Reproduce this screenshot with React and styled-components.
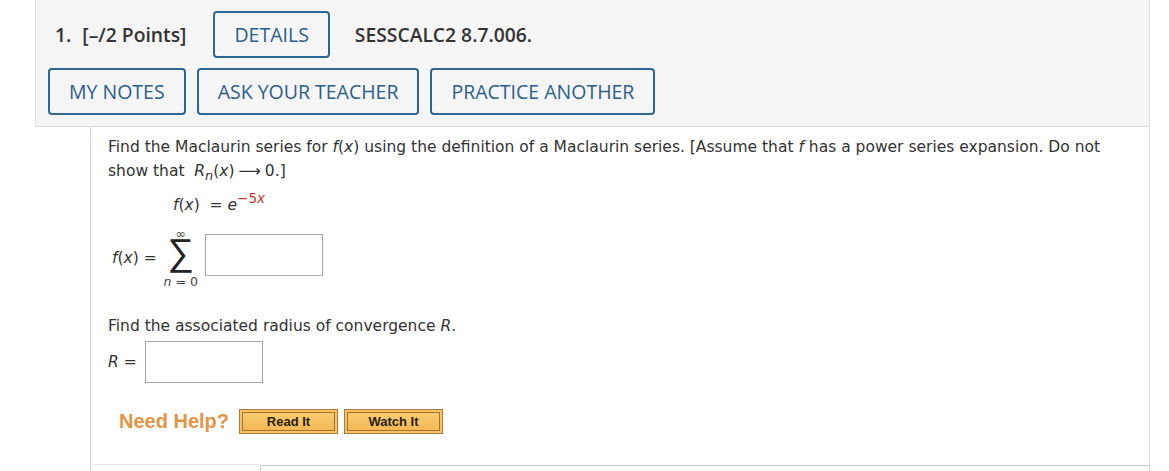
import React from 'react';
import styled, { createGlobalStyle } from 'styled-components';

const GlobalStyle = createGlobalStyle`
  html, body {
    margin: 0;
    padding: 0;
    background: #fff;
    width: 1169px;
    height: 471px;
    overflow: hidden;
  }
`;

const Page = styled.div`
  padding-left: 35px;
  width: 1115px;
`;

const Header = styled.div`
  background: #f5f5f5;
  border: 1px solid #dedede;
  border-top: none;
  padding: 11px 12px 11px;
  display: flex;
  flex-direction: column;
  gap: 10px;
  font-family: 'Open Sans', sans-serif;
`;

const Row = styled.div`
  display: flex;
  align-items: center;
  gap: ${p => p.gap || 11}px;
`;

const Title = styled.div`
  font-weight: 600;
  font-size: 19.3px;
  color: #333;
  padding-left: ${p => p.indent || 0}px;
  margin-right: ${p => p.after || 0}px;
  display: flex;
  gap: 11px;
`;

const OutlineButton = styled.button`
  height: 47px;
  padding: 0 19px;
  background: transparent;
  border: 2px solid #2f6794;
  border-radius: 4px;
  color: #2c5f8c;
  font-family: 'Open Sans', sans-serif;
  font-size: 19.5px;
  font-weight: 500;
  letter-spacing: 0;
  cursor: pointer;
`;

const Question = styled.div`
  margin-left: 55px;
  border-left: 1px solid #dcdcdc;
  border-right: 1px solid #dedede;
  height: 344px;
  display: flex;
  flex-direction: column;
  font-family: 'DejaVu Sans', Verdana, sans-serif;
  font-size: 15.5px;
  color: #333;
`;

const Body = styled.div`
  flex: 1;
  padding: 8px 40px 0 17px;
`;

const Para = styled.p`
  margin: ${p => p.top || 0}px 0 0;
  line-height: 24px;
`;

const I = styled.i`
  font-style: italic;
`;

const Arrow = styled.span`
  margin: 0 4px;
`;

const Formula = styled.div`
  margin: 5px 0 0 65px;
  height: 24px;
  line-height: 24px;
`;

const Exp = styled.span`
  color: #c0392b;
  font-size: 13.5px;
  position: relative;
  top: -7px;
`;

const MathRow = styled.div`
  margin: ${p => p.top || 0}px 0 0 ${p => p.left || 0}px;
  display: flex;
  align-items: center;
  gap: ${p => p.gap || 6}px;
`;

const Sigma = styled.div`
  display: flex;
  flex-direction: column;
  align-items: center;
  width: 40px;
  line-height: 1;
`;

const Limit = styled.span`
  font-size: 12.5px;
  color: #444;
`;

const SigmaGlyph = styled.span`
  font-family: 'DejaVu Sans', sans-serif;
  font-weight: 200;
  font-size: 37px;
  line-height: 35px;
  height: 35px;
  color: #222;
  transform: translateY(-6px);
`;

const AnswerBox = styled.input`
  width: 118px;
  height: 42px;
  box-sizing: border-box;
  border: 1px solid #a9a9a9;
  background: #fff;
  margin: ${p => p.lift || 0}px 0 0 ${p => p.left || 0}px;
`;

const HelpRow = styled.div`
  margin: 26px 0 0 11px;
  display: flex;
  align-items: center;
`;

const NeedHelp = styled.span`
  font-family: 'Liberation Sans', Arial, sans-serif;
  font-weight: 700;
  font-size: 20px;
  color: #e49545;
  margin-right: 10px;
`;

const HelpButton = styled.button`
  width: 99px;
  height: 25px;
  margin-right: 6px;
  padding: 0;
  border: 1px solid #b37a3e;
  background: linear-gradient(#f8cf77, #f2b650);
  box-shadow: inset 0 0 0 2px #f6c463, inset 0 0 0 3px #a86e2d;
  font-family: 'Liberation Sans', Arial, sans-serif;
  font-weight: 700;
  font-size: 13px;
  color: #2a1e10;
  cursor: pointer;
`;

const Footer = styled.div`
  display: flex;
  height: 7px;
`;

const FooterCell = styled.div`
  width: ${p => p.w ? p.w + 'px' : 'auto'};
  flex: ${p => p.w ? 'none' : 1};
  border-top: 1px solid ${p => p.dark ? '#c8c8c8' : '#e6e6e6'};
  border-left: ${p => p.dark ? '1px solid #c8c8c8' : 'none'};
  margin-top: ${p => p.dark ? 1 : 0}px;
`;

export default function App() {
  return (
    <Page>
      <GlobalStyle />
      <Header>
        <Row gap={25}>
          <Title indent={7} after={2}>
            <span>1.</span>
            <span>[–/2 Points]</span>
          </Title>
          <OutlineButton>DETAILS</OutlineButton>
          <Title>SESSCALC2 8.7.006.</Title>
        </Row>
        <Row>
          <OutlineButton>MY NOTES</OutlineButton>
          <OutlineButton>ASK YOUR TEACHER</OutlineButton>
          <OutlineButton>PRACTICE ANOTHER</OutlineButton>
        </Row>
      </Header>
      <Question>
        <Body>
          <Para>
            Find the Maclaurin series for <I>f</I>(<I>x</I>) using the definition of a Maclaurin series. [Assume that <I>f</I> has a power series expansion. Do not show that&nbsp; <I>R</I><sub><I>n</I></sub>(<I>x</I>)<Arrow>⟶</Arrow>0.]
          </Para>
          <Formula>
            <I>f</I>(<I>x</I>)&nbsp; = <I>e</I><Exp>−5<I>x</I></Exp>
          </Formula>
          <MathRow top={11} left={4} gap={4}>
            <span><I>f</I>(<I>x</I>) =</span>
            <Sigma>
              <Limit>∞</Limit>
              <SigmaGlyph>∑</SigmaGlyph>
              <Limit><I>n</I> = 0</Limit>
            </Sigma>
            <AnswerBox lift={-6} />
          </MathRow>
          <Para top={26}>Find the associated radius of convergence <I>R</I>.</Para>
          <MathRow top={3} gap={8}>
            <span><I>R</I> =</span>
            <AnswerBox />
          </MathRow>
          <HelpRow>
            <NeedHelp>Need Help?</NeedHelp>
            <HelpButton>Read It</HelpButton>
            <HelpButton>Watch It</HelpButton>
          </HelpRow>
        </Body>
        <Footer>
          <FooterCell w={169} />
          <FooterCell dark />
        </Footer>
      </Question>
    </Page>
  );
}
